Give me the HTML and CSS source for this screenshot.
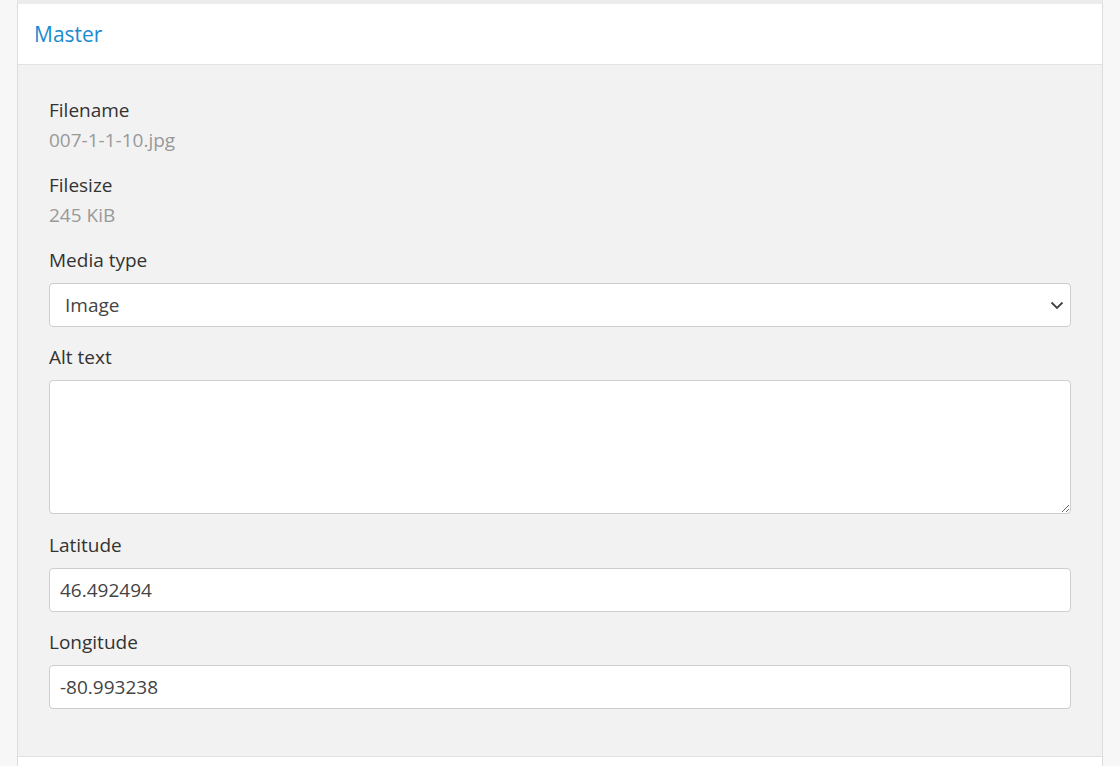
FILE: index.html
```html
<!DOCTYPE html>
<html lang="en">
<head>
<meta charset="utf-8">
<title>Master</title>
<link rel="stylesheet" href="styles.css">
</head>
<body>
<div class="card">
  <div class="card-header">Master</div>
  <div class="card-body">
    <div class="field">
      <div class="label">Filename</div>
      <div class="value">007-1-1-10.jpg</div>
    </div>
    <div class="field">
      <div class="label">Filesize</div>
      <div class="value">245 KiB</div>
    </div>
    <div class="field">
      <label class="label" for="mt">Media type</label>
      <div class="select-wrap">
        <select id="mt" class="control select"><option>Image</option></select>
        <svg class="chevron" width="14" height="10" viewBox="0 0 14 10"><path d="M1.5 2.5 7 8 12.5 2.5" fill="none" stroke="#444" stroke-width="1.8"/></svg>
      </div>
    </div>
    <div class="field">
      <label class="label" for="alt">Alt text</label>
      <textarea id="alt" class="control textarea"></textarea>
    </div>
    <div class="field">
      <label class="label" for="lat">Latitude</label>
      <input id="lat" class="control" type="text" value="46.492494">
    </div>
    <div class="field">
      <label class="label" for="lng">Longitude</label>
      <input id="lng" class="control" type="text" value="-80.993238">
    </div>
  </div>
</div>
</body>
</html>
```
FILE: styles.css
```css
html, body {
  margin: 0;
  padding: 0;
}
body {
  background: #f7f7f7;
  font-family: "Open Sans", "Liberation Sans", sans-serif;
  color: #333;
  height: 766px;
  overflow: hidden;
}
.card {
  margin-left: 17px;
  width: 1086px;
  box-sizing: border-box;
  border-left: 1px solid #dcdcdc;
  border-right: 1px solid #dcdcdc;
  border-top: 4px solid #ececec;
  background: #fff;
  height: 766px;
}
.card-header {
  height: 61px;
  box-sizing: border-box;
  border-bottom: 1px solid #e2e2e2;
  padding-left: 16px;
  display: flex;
  align-items: center;
  font-size: 21px;
  color: #1b8bd0;
}
.card-body {
  background: #f2f2f2;
  padding: 30px 31px 47px 31px;
  border-bottom: 1px solid #e2e2e2;
  display: flex;
  flex-direction: column;
  gap: 15px;
}
.field {
  display: flex;
  flex-direction: column;
}
.label {
  font-size: 19px;
  line-height: 30px;
  color: #333;
}
.value {
  font-size: 19px;
  line-height: 30px;
  color: #999;
}
.label + .control,
.label + .select-wrap {
  margin-top: 8px;
}
.control {
  display: block;
  width: 100%;
  box-sizing: border-box;
  height: 44px;
  border: 1px solid #cdcdcd;
  border-radius: 4px;
  background: #fff;
  font-family: "Open Sans", "Liberation Sans", sans-serif;
  font-size: 19px;
  color: #444;
  padding: 0 10px;
  margin: 0;
  outline: none;
}
.select-wrap {
  position: relative;
}
.select {
  appearance: none;
  -webkit-appearance: none;
  padding: 0 15px;
}
.chevron {
  position: absolute;
  right: 7px;
  top: 17px;
}
.textarea {
  height: 134px;
  resize: vertical;
  padding: 8px 10px;
}
.field:nth-child(4) {
  margin-bottom: 1px;
}
```
